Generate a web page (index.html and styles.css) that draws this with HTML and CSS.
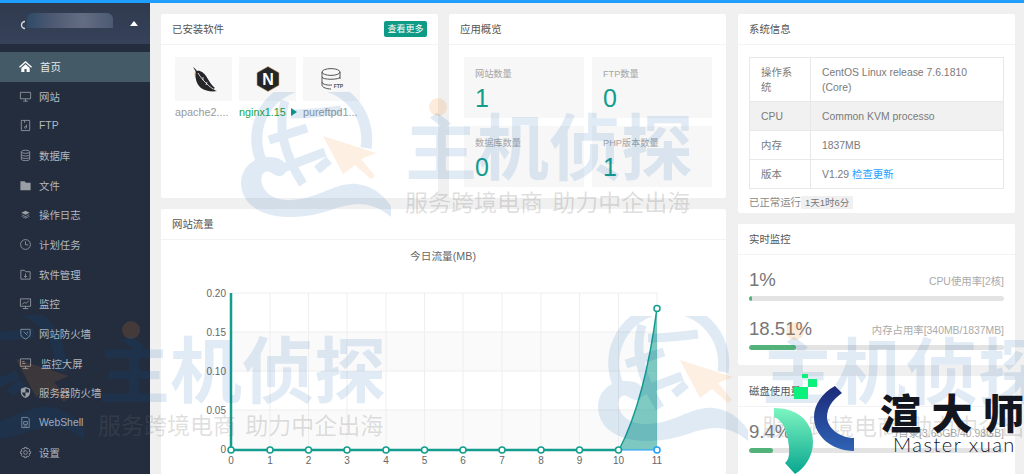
FILE: index.html
```html
<!DOCTYPE html>
<html lang="zh">
<head>
<meta charset="utf-8">
<title>首页</title>
<link rel="stylesheet" href="styles.css">
</head>
<body>
<svg class="defs" width="0" height="0" aria-hidden="true">
  <defs>
    <symbol id="globe" viewBox="0 0 150 125">
      <g fill="none" stroke="#005aaf">
        <path d="M24 76A55 55 0 1 1 125 56" stroke-width="11"/>
        <path d="M44 9C36 35 44 64 62 92M50 22C66 22 84 20 100 18M28 48L66 36M42 76L84 60M76 78L88 68" stroke-width="9"/>
      </g>
      <path fill="#005aaf" d="M0 92C0 70 20 62 36 66C48 69 48 84 38 84C32 84 30 78 24 80C16 84 20 106 44 108C74 110 92 90 116 92C130 94 140 100 150 114L150 125C130 108 112 110 90 118C50 132 2 126 0 92Z"/>
    </symbol>
    <symbol id="pointer" viewBox="0 0 60 50">
      <path fill="#f0821e" d="M0 0L53 17L38 23L52 40L48 43L32 29L20 38Z"/>
    </symbol>
  </defs>
</svg>

<div class="topbar"></div>
<div class="layout">
  <aside class="sidebar">
    <div class="user">
      <svg class="user-icon" viewBox="0 0 8 10"><path d="M6 1.5A3.5 3.5 0 1 0 6 8.5" fill="none" stroke="#d5d8dd" stroke-width="1.4"/></svg>
      <span class="user-name"></span>
      <span class="user-caret"></span>
    </div>
    <nav class="nav">
      <a class="nav-item is-active"><svg class="ico" viewBox="0 0 14 14"><path fill="#fff" d="M7 1L0 7.2L1 8.3L7 3L13 8.3L14 7.2ZM2.5 8.6V13H5.8V9.6H8.2V13H11.5V8.6L7 4.5Z"/></svg>首页</a>
      <a class="nav-item"><svg class="ico" viewBox="0 0 14 14"><path d="M1.5 2.5H12.5V9.5H1.5ZM4.5 12H9.5M7 9.5V12"/></svg>网站</a>
      <a class="nav-item"><svg class="ico" viewBox="0 0 14 14"><path d="M2.5 1.5H11.5V12.5H2.5ZM6 1.5V4M8 6V9A1 1 0 1 1 7 8H8"/></svg>FTP</a>
      <a class="nav-item"><svg class="ico" viewBox="0 0 14 14"><ellipse cx="7" cy="3" rx="4.5" ry="1.7"/><path d="M2.5 3V11C2.5 13 11.5 13 11.5 11V3M2.5 6C2.5 8 11.5 8 11.5 6M2.5 8.7C2.5 10.7 11.5 10.7 11.5 8.7"/></svg>数据库</a>
      <a class="nav-item"><svg class="ico" viewBox="0 0 14 14"><path class="solid" d="M1.5 2.5H6L7.5 4H12.5V12H1.5Z"/></svg>文件</a>
      <a class="nav-item"><svg class="ico" viewBox="0 0 14 14"><path class="solid" d="M7 3L11.5 5.2L7 7.4L2.5 5.2ZM3.2 7L7 8.8L10.8 7L11.5 7.4L7 9.6L2.5 7.4ZM3.2 8.8L7 10.6L10.8 8.8L11.5 9.2L7 11.4L2.5 9.2Z"/></svg>操作日志</a>
      <a class="nav-item"><svg class="ico" viewBox="0 0 14 14"><circle cx="7" cy="7" r="5.3"/><path d="M7 3.6V7.4H10"/></svg>计划任务</a>
      <a class="nav-item"><svg class="ico" viewBox="0 0 14 14"><path d="M2 2.5H6L7 4H12V12H2ZM7 6V10M5.4 8.6L7 10.2L8.6 8.6"/></svg>软件管理</a>
      <a class="nav-item"><svg class="ico" viewBox="0 0 14 14"><path d="M1.5 2H12.5V10H1.5ZM4 12.5H10M7 10V12.5M3.5 8L6 5.5L7.5 7L10.5 4"/></svg>监控</a>
      <a class="nav-item"><svg class="ico" viewBox="0 0 14 14"><path d="M2 2.5H12V8C12 10.5 9 12 7 13C5 12 2 10.5 2 8ZM5 5L9 9M9 5V7"/></svg>网站防火墙</a>
      <a class="nav-item nav-item-shift"><svg class="ico" viewBox="0 0 14 14"><path d="M1.5 2H12.5V10H1.5ZM4 12.5H10M7 10V12.5M3.5 5H6M3.5 7H7"/></svg>监控大屏</a>
      <a class="nav-item"><svg class="ico" viewBox="0 0 14 14"><path class="solid" d="M7 1L12 3V7C12 10 9.5 12 7 13C4.5 12 2 10 2 7V3ZM7 2.4V7H3.2C3.3 9 5 10.8 7 11.6V7H10.8V3.8Z"/></svg>服务器防火墙</a>
      <a class="nav-item"><svg class="ico" viewBox="0 0 14 14"><path d="M3 1.5H9.5L11 3V12.5H3ZM5 6H9V9H5ZM5 10.8H9"/></svg>WebShell</a>
      <a class="nav-item"><svg class="ico" viewBox="0 0 14 14"><circle cx="7" cy="7" r="2"/><path d="M6 1.5H8L8.4 3.2L10 2.5L11.5 4L10.8 5.6L12.5 6V8L10.8 8.4L11.5 10L10 11.5L8.4 10.8L8 12.5H6L5.6 10.8L4 11.5L2.5 10L3.2 8.4L1.5 8V6L3.2 5.6L2.5 4L4 2.5L5.6 3.2Z"/></svg>设置</a>
    </nav>
  </aside>

  <main class="main">
    <div class="col-left">
      <div class="row-top">
        <section class="card card-top">
          <header class="card-head">
            <h2 class="card-title">已安装软件</h2>
            <a class="btn-more">查看更多</a>
          </header>
          <div class="soft-list">
            <div class="soft">
              <div class="soft-tile">
                <svg class="soft-icon" viewBox="0 0 28 28">
                  <path fill="#e9a04a" d="M5 6C4 10 5 13 7 15L9 9Z"/>
                  <path fill="#26262a" d="M3 2C5 3 6 5 7 6C10 5 14 8 16 11C18 14 21 20 25 23L23 24C25 25 26 26 27 26C22 27 15 26 11 23C6 19 5 12 6 7C5 5 4 4 3 2Z"/>
                  <path stroke="#fff" stroke-width=".8" fill="none" d="M8 8C11 13 16 19 23 24M13 12L13 15M17 17L16 20"/>
                </svg>
              </div>
              <span class="soft-name">apache2....</span>
            </div>
            <div class="soft">
              <div class="soft-tile">
                <svg class="soft-icon" viewBox="0 0 28 28">
                  <path fill="#22262b" stroke="#d8a66a" stroke-width=".6" d="M14 1.5L25 7.7V20.3L14 26.5L3 20.3V7.7Z"/>
                  <text class="nginx-n" x="14" y="20" text-anchor="middle">N</text>
                </svg>
              </div>
              <span class="soft-name soft-run">nginx1.15<i class="run-arrow"></i></span>
            </div>
            <div class="soft">
              <div class="soft-tile">
                <svg class="soft-icon" viewBox="0 0 28 28">
                  <g fill="none" stroke="#555" stroke-width="1">
                    <ellipse cx="13" cy="7" rx="9" ry="3.4"/>
                    <path d="M4 7V20C4 22.5 9 24 13 24M22 7V14M4 12C4 15 22 15 22 12M4 17C4 19.5 10 20.5 14 20"/>
                  </g>
                  <text class="ftp-mark" x="20.5" y="23" text-anchor="middle">FTP</text>
                </svg>
              </div>
              <span class="soft-name">pureftpd1...</span>
            </div>
          </div>
        </section>

        <section class="card card-top">
          <header class="card-head"><h2 class="card-title">应用概览</h2></header>
          <div class="overview">
            <div class="stat"><span class="stat-label">网站数量</span><span class="stat-num">1</span></div>
            <div class="stat"><span class="stat-label">FTP数量</span><span class="stat-num">0</span></div>
            <div class="stat"><span class="stat-label">数据库数量</span><span class="stat-num">0</span></div>
            <div class="stat"><span class="stat-label">PHP版本数量</span><span class="stat-num">1</span></div>
          </div>
        </section>
      </div>

      <section class="card card-chart">
        <header class="card-head"><h2 class="card-title">网站流量</h2></header>
        <svg class="chart" viewBox="161 240 565 234">
          <text class="chart-title" x="443" y="260" text-anchor="middle">今日流量(MB)</text>
          <rect class="band" x="231" y="332" width="426" height="39"/>
          <rect class="band" x="231" y="410" width="426" height="40"/>
          <path class="grid" d="M231 293H657M231 332H657M231 371H657M231 410H657M270 293V450M308.500 293V450M347 293V450M386 293V450M424.500 293V450M463 293V450M502 293V450M541 293V450M579.500 293V450M618.500 293V450M657 293V450"/>
          <path class="area" d="M619 450Q645 400 657 308V450Z"/>
          <path class="line" d="M231 293V450H619"/>
          <path class="line-thin" d="M619 450Q645 400 657 308"/>
          <path class="line-blue" d="M619 450H657"/>
          <g class="dots">
            <circle cx="231" cy="450" r="3"/><circle cx="270" cy="450" r="3"/><circle cx="308.500" cy="450" r="3"/><circle cx="347" cy="450" r="3"/><circle cx="386" cy="450" r="3"/><circle cx="424.500" cy="450" r="3"/><circle cx="463" cy="450" r="3"/><circle cx="502" cy="450" r="3"/><circle cx="541" cy="450" r="3"/><circle cx="579.500" cy="450" r="3"/><circle cx="618.500" cy="450" r="3"/><circle cx="657" cy="308.500" r="3"/>
          </g>
          <circle class="dot-blue" cx="657" cy="450" r="3"/>
          <g class="ylabels" text-anchor="end">
            <text x="226" y="297">0.20</text><text x="226" y="336">0.15</text><text x="226" y="375">0.10</text><text x="226" y="414">0.05</text><text x="226" y="453">0</text>
          </g>
          <g class="xlabels" text-anchor="middle">
            <text x="231" y="464">0</text><text x="270" y="464">1</text><text x="308.500" y="464">2</text><text x="347" y="464">3</text><text x="386" y="464">4</text><text x="424.500" y="464">5</text><text x="463" y="464">6</text><text x="502" y="464">7</text><text x="541" y="464">8</text><text x="579.500" y="464">9</text><text x="618.500" y="464">10</text><text x="657" y="464">11</text>
          </g>
        </svg>
      </section>
    </div>

    <div class="col-right">
      <section class="card">
        <header class="card-head"><h2 class="card-title">系统信息</h2></header>
        <div class="sys-body">
          <table class="sys-table">
            <tr><th>操作系统</th><td>CentOS Linux release 7.6.1810 (Core)</td></tr>
            <tr class="is-shaded"><th>CPU</th><td>Common KVM processo</td></tr>
            <tr><th>内存</th><td>1837MB</td></tr>
            <tr><th>版本</th><td>V1.29 <a class="link">检查更新</a></td></tr>
          </table>
          <p class="uptime">已正常运行<span class="uptime-badge">1天1时6分</span></p>
        </div>
      </section>

      <section class="card">
        <header class="card-head"><h2 class="card-title">实时监控</h2></header>
        <div class="meters">
          <div class="meter">
            <div class="meter-top"><span class="meter-val">1%</span><span class="meter-label">CPU使用率[2核]</span></div>
            <div class="bar"><div class="bar-fill" style="width:1%"></div></div>
          </div>
          <div class="meter">
            <div class="meter-top"><span class="meter-val">18.51%</span><span class="meter-label">内存占用率[340MB/1837MB]</span></div>
            <div class="bar"><div class="bar-fill" style="width:18.51%"></div></div>
          </div>
        </div>
      </section>

      <section class="card">
        <header class="card-head"><h2 class="card-title">磁盘使用量</h2></header>
        <div class="meters">
          <div class="meter">
            <div class="meter-top"><span class="meter-val">9.4%</span><span class="meter-label">/目录[3.65GB/40.98GB]</span></div>
            <div class="bar"><div class="bar-fill" style="width:9.4%"></div></div>
          </div>
          <div class="meter">
            <div class="meter-top"><span class="meter-val">3.4%</span></div>
          </div>
        </div>
      </section>
    </div>
  </main>
</div>

<div class="wm wm-1">
  <svg class="wm-globe"><use href="#globe"/></svg>
  <svg class="wm-pointer"><use href="#pointer"/></svg>
  <span class="wm-dot"></span>
  <span class="wm-big">主机侦探</span>
  <span class="wm-sub">服务跨境电商 助力中企出海</span>
</div>
<div class="wm wm-2">
  <svg class="wm-globe"><use href="#globe"/></svg>
  <svg class="wm-pointer"><use href="#pointer"/></svg>
  <span class="wm-dot"></span>
  <span class="wm-big">主机侦探</span>
  <span class="wm-sub">服务跨境电商 助力中企出海</span>
</div>
<div class="wm wm-3">
  <svg class="wm-globe"><use href="#globe"/></svg>
  <svg class="wm-pointer"><use href="#pointer"/></svg>
  <span class="wm-dot"></span>
  <span class="wm-big">主机侦探</span>
  <span class="wm-sub">服务跨境电商 助力中企出海</span>
</div>

<svg class="brand" viewBox="760 370 264 104">
  <defs>
    <linearGradient id="brand-green" x1="0" y1="0" x2="0" y2="1"><stop offset="0" stop-color="#7df5c0"/><stop offset="1" stop-color="#08a690"/></linearGradient>
    <linearGradient id="brand-blue" x1="0" y1="0" x2="0" y2="1"><stop offset="0" stop-color="#1c2a78"/><stop offset="1" stop-color="#2f63b5"/></linearGradient>
  </defs>
  <path fill="#0cf07c" d="M802 374H808V378H802ZM808 379H817V387H808ZM794 387H808V399H794Z"/>
  <path fill="url(#brand-green)" d="M774 408C800 408 813 424 813 442C813 456 805 468 795 474L785 463C791 459 789 446 788 440C786 428 782 420 774 417Z"/>
  <path fill="url(#brand-blue)" d="M835 386L842 393C832 400 827 408 827 417C827 428 840 438 854 438V451C832 451 814 436 814 417C814 405 822 393 835 386Z"/>
  <text class="brand-cn" x="880" y="429">渲大师</text>
  <text class="brand-en" x="893" y="452">Master xuan</text>
</svg>
</body>
</html>
```

FILE: styles.css
```css
* { box-sizing: border-box; }

html, body {
  margin: 0;
  height: 474px;
  overflow: hidden;
}

body {
  position: relative;
  background: #f0f0f0;
  font-family: "Liberation Sans", "Noto Sans CJK SC", sans-serif;
  font-size: 10.400px;
  color: #666;
}

.defs { position: absolute; }

.topbar {
  height: 3px;
  background: #1e9fff;
}

.layout {
  display: flex;
  height: 471px;
}

/* Sidebar */
.sidebar {
  flex: 0 0 150px;
  background: #232d3e;
}

.user {
  height: 41px;
  display: flex;
  align-items: center;
  padding: 0 12px 0 19px;
  background: linear-gradient(#2f3a4e, #364259);
}

.user-icon {
  width: 8px;
  height: 10px;
  margin-top: 2px;
}

.user-name {
  width: 86px;
  height: 15px;
  margin-top: -6px;
  border-radius: 6px 6px 0 0;
  background: linear-gradient(90deg, #2f4a68, #4e5a72 30%, #646c82 65%, #4b5a74);
}

.user-caret {
  width: 0;
  height: 0;
  margin-left: auto;
  border: 4px solid transparent;
  border-top: 0;
  border-bottom: 5px solid #fff;
}

.nav {
  padding-top: 8px;
}

.nav-item {
  display: flex;
  align-items: center;
  gap: 7px;
  height: 29.700px;
  padding: 0 0 1px 19px;
  color: #b4b8bf;
  font-size: 10.400px;
}

.nav-item.is-active {
  gap: 8px;
  background: #455a67;
  color: #e6e8ea;
}

.nav-item-shift { gap: 9px; }

.ico {
  width: 13px;
  height: 13px;
  flex: none;
  fill: none;
  stroke: #8f949c;
  stroke-width: 1;
}

.ico .solid {
  fill: #9a9ea5;
  stroke: none;
}

.is-active .ico { stroke: none; }

/* Main grid */
.main {
  flex: 1;
  display: flex;
  gap: 12px;
  padding: 11px 0 0 11px;
  min-width: 0;
  overflow: hidden;
}

.col-left {
  flex: 0 0 565px;
  display: flex;
  flex-direction: column;
  gap: 11px;
}

.row-top {
  display: flex;
  gap: 11px;
}

.col-right {
  flex: 0 0 277px;
  display: flex;
  flex-direction: column;
  gap: 11px;
}

.card {
  background: #fff;
  border-radius: 2px;
}

.card-top {
  flex: 0 0 277px;
  height: 184px;
}

.card-chart { flex: 1; }

.card-head {
  height: 31px;
  display: flex;
  align-items: center;
  justify-content: space-between;
  padding: 0 11px 1px;
  border-bottom: 1px solid #f3f3f3;
}

.card-title {
  margin: 0;
  font-size: 10.400px;
  font-weight: 400;
  color: #555;
}

.btn-more {
  width: 43px;
  height: 16px;
  border-radius: 2px;
  background: #0e9a85;
  color: #fff;
  font-size: 9px;
  line-height: 16px;
  text-align: center;
}

/* Installed software */
.soft-list {
  display: flex;
  gap: 7px;
  padding: 12px 14px;
}

.soft { width: 57px; }

.soft-tile {
  height: 44px;
  display: flex;
  align-items: center;
  justify-content: center;
  background: #f7f7f7;
}

.soft-icon {
  width: 28px;
  height: 28px;
}

.nginx-n {
  font: 700 16px "Liberation Sans", sans-serif;
  fill: #fff;
}

.ftp-mark {
  font: 700 5px "Liberation Sans", sans-serif;
  fill: #555;
}

.soft-name {
  display: block;
  margin-top: 3px;
  width: 60px;
  font-size: 10.800px;
  line-height: 16px;
  color: #999;
  white-space: nowrap;
}

.soft-run {
  display: flex;
  align-items: center;
  color: #20a53a;
}

.run-arrow {
  flex: none;
  width: 0;
  height: 0;
  margin-left: 5px;
  border-top: 4px solid transparent;
  border-bottom: 4px solid transparent;
  border-left: 6px solid #0e9a85;
}

/* Overview */
.overview {
  display: grid;
  grid-template-columns: 120px 120px;
  grid-auto-rows: 61px;
  gap: 8px;
  padding: 12px 0 12px 15px;
}

.stat {
  display: flex;
  flex-direction: column;
  padding: 10px 11px 0;
  background: #f7f7f7;
}

.stat-label {
  font-size: 9.200px;
  line-height: 14px;
  color: #a5a5a5;
}

.stat-num {
  margin-top: 3px;
  font-size: 25px;
  line-height: 29px;
  color: #129d8e;
}

/* Chart */
.chart {
  display: block;
  width: 565px;
  height: 234px;
}

.chart-title {
  font-size: 10.700px;
  fill: #666;
}

.band { fill: #fafafa; }

.grid {
  fill: none;
  stroke: #eee;
  stroke-width: 1;
}

.area { fill: rgba(18, 157, 142, .54); }

.line {
  fill: none;
  stroke: #129d8e;
  stroke-width: 2.500;
}

.line-thin {
  fill: none;
  stroke: #129d8e;
  stroke-width: 1.500;
}

.line-blue {
  fill: none;
  stroke: #1e9fff;
  stroke-width: 1;
}

.dots circle {
  fill: #fff;
  stroke: #129d8e;
  stroke-width: 1.500;
}

.dot-blue {
  fill: #fff;
  stroke: #1e9fff;
  stroke-width: 1.500;
}

.ylabels, .xlabels {
  font-size: 10px;
  fill: #666;
}

/* System info */
.sys-body { padding: 12px 11px 0; }

.sys-table {
  width: 255px;
  border-collapse: collapse;
  table-layout: fixed;
  font-size: 10.400px;
  line-height: 15px;
  color: #7a7a7a;
}

.sys-table th,
.sys-table td {
  padding: 6.500px 11px;
  border: 1px solid #e8e8e8;
  font-weight: 400;
  text-align: left;
}

.sys-table th { width: 61px; }

.is-shaded { background: #f1f1f1; }

.link { color: #1e9fff; }

.uptime {
  margin: 5px 0 0;
  height: 19px;
  line-height: 17px;
  font-size: 10.400px;
  color: #888;
}

.uptime-badge {
  display: inline-block;
  padding: 0 4px;
  height: 13px;
  line-height: 13px;
  font-size: 9.500px;
  background: #f0f0f0;
  color: #777;
}

/* Meters */
.meters { padding: 12px 11px 0; }

.meter { height: 49px; }

.meter-top {
  display: flex;
  justify-content: space-between;
  align-items: center;
  height: 26px;
}

.meter-val {
  font-size: 18.600px;
  color: #777;
}

.meter-label {
  font-size: 10.400px;
  color: #aaa;
}

.bar {
  height: 5px;
  margin-top: 3px;
  border-radius: 3px;
  background: #e3e3e3;
  overflow: hidden;
}

.bar-fill {
  height: 100%;
  background: #52b27a;
  border-radius: 3px;
}

/* Watermarks over the page */
.wm {
  position: absolute;
  width: 480px;
  height: 130px;
  pointer-events: none;
}

.wm-1 { left: 241px; top: 92px; }
.wm-2 { left: -66px; top: 315px; }
.wm-3 { left: 598px; top: 316px; }

.wm-globe {
  position: absolute;
  left: 0;
  top: 0;
  width: 150px;
  height: 125px;
  opacity: .12;
}

.wm-pointer {
  position: absolute;
  left: 82px;
  top: 44px;
  width: 60px;
  height: 50px;
  opacity: .12;
}

.wm-dot {
  position: absolute;
  left: 188px;
  top: 6px;
  width: 18px;
  height: 18px;
  border-radius: 50%;
  background: rgba(240, 130, 30, .16);
}

.wm-big {
  position: absolute;
  left: 164px;
  top: 6px;
  font-family: "Noto Sans CJK SC", sans-serif;
  font-size: 72px;
  line-height: 90px;
  font-weight: 700;
  white-space: nowrap;
  color: rgba(0, 90, 175, .12);
}

.wm-sub {
  position: absolute;
  left: 164px;
  top: 93px;
  font-family: "Noto Sans CJK SC", sans-serif;
  font-size: 23px;
  line-height: 32px;
  word-spacing: 4px;
  white-space: nowrap;
  color: rgba(110, 110, 110, .22);
}

/* Brand stamp */
.brand {
  position: absolute;
  left: 760px;
  top: 370px;
  width: 264px;
  height: 104px;
  pointer-events: none;
}

.brand-cn {
  font-family: "Noto Sans CJK SC", sans-serif;
  font-size: 41px;
  font-weight: 900;
  letter-spacing: 10.500px;
  fill: #14161f;
}

.brand-en {
  font-family: "Lato", sans-serif;
  font-size: 20px;
  font-weight: 300;
  letter-spacing: 1.500px;
  fill: #14161f;
}
```
